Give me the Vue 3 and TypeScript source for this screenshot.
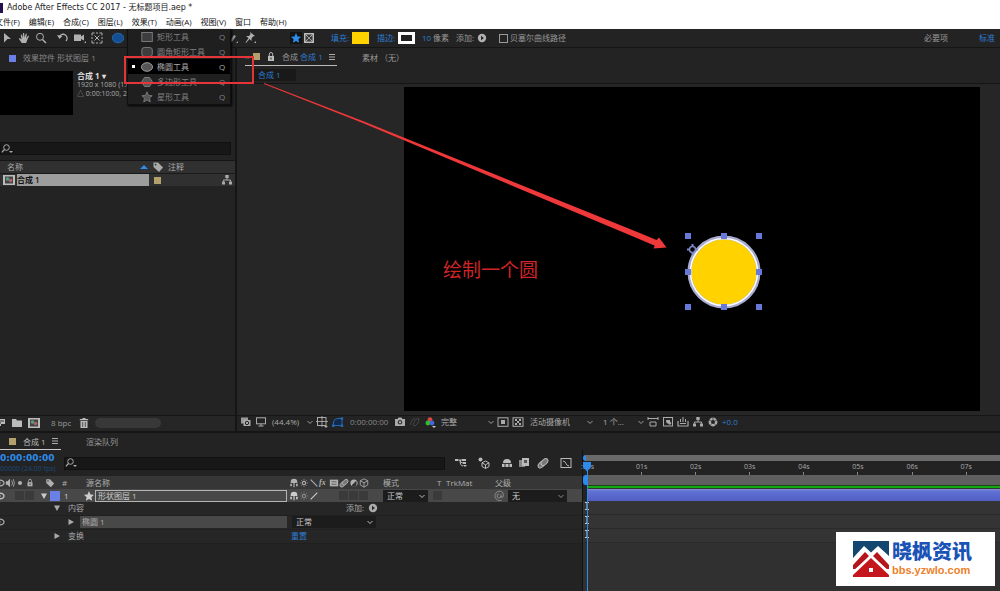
<script setup lang="ts">
import { h } from 'vue'

const icons: Record<string, string> = {
  select: '<path d="M3 1l7 6H6.500L3 10.500z" fill="currentColor"/>',
  hand: '<path d="M3.800 11L.8 6.800l1-.7L3.500 7.500 2.700 2.800l1-.3 1.100 3.300L5 1h1.100l.4 4.600L7.800 1.500l1 .3-.6 4.600 1.900-2.800.9.5L9 8.500 8.200 11z" fill="currentColor"/>',
  zoom: '<circle cx="5" cy="4.800" r="3.500" fill="none" stroke="currentColor"/><path d="M7.500 7.500L11 11" stroke="currentColor" stroke-width="1.500"/>',
  rotate: '<path d="M2.500 4.500A4 4 0 1 1 9 9" fill="none" stroke="currentColor" stroke-width="1.300"/><path d="M0 3l2.500 4L5.500 4z" fill="currentColor"/>',
  camera: '<path d="M0 2.500h7v2l3-2v6L7 7v2H0zM10 11h2V9z" fill="currentColor"/>',
  pan: '<path d="M1 3.500V1h2.500M8.500 1H11v2.500M11 8.500V11H8.500M3.500 11H1V8.500M5 1h2M5 11h2M1 5v2M11 5v2M3.500 3.500l5 5M8.500 3.500l-5 5" fill="none" stroke="currentColor"/><path d="M5 5h2v2H5z" fill="currentColor"/>',
  ellipse: '<ellipse cx="6" cy="6" rx="5.800" ry="4.800" fill="#164f91" stroke="#2476c8" stroke-width=".7"/>',
  pen: '<path d="M1 10l5-7 2 1-4 6zM8 11h2V9z" fill="currentColor"/>',
  pin: '<path d="M6 0l5 4-2 .5-1.500 2V9L5.500 7 2 11l-.5-.5L4.500 6 2 4h3l1.500-1.800zM10 11h2V9z" fill="currentColor"/>',
  star: '<path d="M6 1l1.500 3.400 3.500.4-2.600 2.400.7 3.600L6 9 2.900 10.800l.7-3.600L1 4.800l3.500-.4z" fill="currentColor"/>',
  starline: '<path d="M6 .8l1.500 3.500 3.700.4-2.700 2.500.8 3.700L6 9 2.700 10.900l.8-3.700L.8 4.700l3.700-.4z" fill="#555" stroke="currentColor" stroke-width=".8"/>',
  tonecheck: '<rect x="1.500" y="1.500" width="9" height="9" fill="#777" stroke="#bbb"/><circle cx="6" cy="6" r="3" fill="#333"/><path d="M2 2l8 8M10 2l-8 8" stroke="#bbb" stroke-width=".8"/>',
  add: '<circle cx="6" cy="6" r="4.200" fill="currentColor"/><path d="M5 3.800L7.800 6 5 8.200z" fill="#222"/>',
  rect: '<rect x=".8" y="1.500" width="10.500" height="9" fill="#3d3d3d" stroke="currentColor" stroke-width=".9"/>',
  round: '<rect x=".8" y="1.500" width="10.500" height="9" rx="2.500" fill="#3d3d3d" stroke="currentColor" stroke-width=".9"/>',
  oval: '<ellipse cx="6" cy="6" rx="5.500" ry="4.300" fill="#555" stroke="currentColor" stroke-width=".9"/>',
  poly: '<path d="M3.500 1.500h5L11.500 6l-3 4.500h-5L.5 6z" fill="#555" stroke="currentColor" stroke-width=".9"/>',
  lock: '<rect x="3" y="5" width="6" height="5" fill="currentColor"/><path d="M4.300 5V3.200a1.700 1.700 0 0 1 3.400 0V5" fill="none" stroke="currentColor"/><path d="M6 6.500v2" stroke="#222"/>',
  menu: '<path d="M3 3.500h6M3 6h6M3 8.500h6" stroke="currentColor" stroke-width=".9"/>',
  search: '<circle cx="5.500" cy="4.500" r="2.800" fill="none" stroke="currentColor"/><path d="M3.500 6.500L.8 9.300" stroke="currentColor" stroke-width="1.200"/><path d="M8 8h4l-2 2z" fill="currentColor"/>',
  up: '<path d="M2 8l4-4 4 4z" fill="#2d8ceb"/>',
  tag: '<path d="M1.500 1.500h4.500L11 6.500 7 11 1.500 6z" fill="currentColor"/><circle cx="3.600" cy="3.600" r=".9" fill="#333"/>',
  comp: '<rect x="0" y="1" width="12" height="10" fill="#bbb"/><rect x="2" y="2.500" width="8" height="7" fill="#444"/><circle cx="4.500" cy="5" r="1.800" fill="#5a9c8a"/><circle cx="7.500" cy="6.500" r="1.800" fill="#a66"/>',
  tree: '<path d="M4.300 1h3.400v3H4.300zM1 7.500h3v3H1zM8 7.500h3v3H8z" fill="currentColor"/><path d="M6 4v2M2.500 7.500V6h7v1.500" fill="none" stroke="currentColor"/>',
  footage: '<path d="M0 2h9v5H5v2H0z" fill="currentColor"/><path d="M1 4h7M1 6h4" stroke="#333"/>',
  folder: '<path d="M1 2h4l1 1.500h5V10H1z" fill="currentColor"/>',
  trash: '<path d="M2.500 4h7v7h-7zM1.800 2h8.400v1.200H1.800zM4.500 1h3v1h-3z" fill="currentColor"/><path d="M4.700 5v5M7.300 5v5" stroke="#333" stroke-width=".8"/>',
  layers: '<rect x="1" y="1.500" width="7" height="6" fill="#999"/><path d="M3.500 4h7v6h-7z" fill="currentColor"/><circle cx="7" cy="7" r="1.700" fill="none" stroke="#222"/>',
  monitor: '<rect x="1.500" y="1.800" width="9" height="6" fill="none" stroke="currentColor"/><path d="M3.500 10h5M6 8v2" stroke="currentColor"/>',
  chev: '<path d="M3.500 5L6 7.500 8.500 5" fill="none" stroke="currentColor" stroke-width=".9"/>',
  guides: '<rect x="1.500" y="1.500" width="8.500" height="8" fill="none" stroke="currentColor"/><path d="M6 0v11M0 5.500h12" stroke="currentColor" stroke-width=".9"/><path d="M8 10h4l-2 2z" fill="currentColor"/>',
  mask: '<path d="M1.500 9.500V6Q2 2.500 6 2.500h4v7z" fill="#10284a" stroke="#2467b0"/><path d="M0 8.500h2.500V11H0zM8.700 1.200h2.500v2.500H8.700zM8.700 8.500h2.500V11H8.700z" fill="#2467b0"/>',
  snap: '<path d="M1 3h2.500l1-1.500h3L8.500 3H11v7H1z" fill="currentColor"/><circle cx="6" cy="6.300" r="2.200" fill="#333"/><circle cx="6" cy="6.300" r="1" fill="#ccc"/>',
  ghost: '<path d="M2 9l2-5 3-2M5 9l2-5 4-2-1 5-3 3z" stroke="#444" fill="none"/>',
  rgb: '<circle cx="6" cy="3.600" r="2.400" fill="#d44"/><circle cx="3.900" cy="7" r="2.400" fill="#3b3"/><circle cx="8" cy="7" r="2.400" fill="#46d"/><path d="M8 10h4l-2 2z" fill="#ccc"/>',
  roi: '<rect x="1" y="1.800" width="10" height="8.500" fill="none" stroke="currentColor"/><rect x="4" y="4" width="4" height="4" fill="currentColor"/>',
  grid: '<rect x="1" y="1.800" width="10" height="8.500" fill="none" stroke="currentColor"/><path d="M3 3h2v2H3zM7 3h2v2H7zM5 5h2v2H5zM3 7h2v2H3zM7 7h2v2H7z" fill="currentColor"/>',
  aspect: '<path d="M1 1v3M11 1v3M1 2.500h10M3 6h6v4H3z" fill="none" stroke="currentColor"/>',
  fast: '<rect x="1.500" y="1.500" width="9" height="8.500" fill="none" stroke="currentColor"/><path d="M4 4h4v1.500L9.500 7 8 9 6 7.500 4.500 7z" fill="currentColor"/>',
  tl: '<path d="M1 5v5h10V5M3 7.500h6" fill="none" stroke="currentColor" stroke-width="1.200"/><path d="M5.500 1h1v5h-1zM3 3h1v3H3zM8 3h1v3H8z" fill="currentColor"/>',
  shutter: '<circle cx="6" cy="6" r="3.200" fill="none" stroke="currentColor" stroke-width="2.400"/><path d="M6 1v3M10 4L7.500 5M9 10L7.500 7.500M3 10l1.500-2.500M2 4l2.500 1" stroke="#333" stroke-width=".7"/>',
  eye: '<ellipse cx="6" cy="6" rx="5" ry="3" fill="none" stroke="currentColor" stroke-width="1.300"/><circle cx="6" cy="6" r="1.500" fill="currentColor"/>',
  speaker: '<path d="M1 4h2l3-3v10L3 8H1z" fill="currentColor"/><path d="M8 3q2 3 0 6M10 1.500q2.500 4.500 0 9" fill="none" stroke="currentColor"/>',
  solo: '<circle cx="6" cy="6" r="2.500" fill="currentColor"/>',
  down: '<path d="M3 3.500h6L6 9z" fill="currentColor"/>',
  right: '<path d="M3.500 3l5.500 3-5.500 3z" fill="currentColor"/>',
  shy: '<path d="M2 5a4 4 0 0 1 8 0v1H2zM5.300 6h1.400v5H5.300zM1.500 7h2v3h-2zM8.500 7h2v3h-2z" fill="currentColor"/>',
  sun: '<circle cx="6" cy="6" r="2" fill="none" stroke="currentColor" stroke-width="1.300"/><path d="M6 1v2M6 9v2M1 6h2M9 6h2M2.500 2.500l1 1M9.500 9.500l-1-1M9.500 2.500l-1 1M2.500 9.500l1-1" stroke="currentColor" stroke-width=".7"/>',
  back: '<path d="M2 2l8 8" stroke="currentColor" stroke-width="1.300"/>',
  slash: '<path d="M2 10l8-8" stroke="currentColor" stroke-width="1.300"/>',
  film: '<rect x="1" y="2" width="10" height="8" fill="currentColor"/><path d="M3 4.500h6M3 7.500h6" stroke="#555"/>',
  blur: '<ellipse cx="4.500" cy="7.500" rx="4" ry="2.500" transform="rotate(-45 4.500 7.500)" fill="#777" stroke="currentColor"/><ellipse cx="7.500" cy="5" rx="4" ry="2.500" transform="rotate(-45 7.500 5)" fill="#777" stroke="currentColor"/>',
  half: '<circle cx="6" cy="6" r="4.300" fill="currentColor"/><path d="M9 3L3 9A4.300 4.300 0 0 0 9 9z" fill="#333"/>',
  cube: '<path d="M6 1l4.500 2.300v5L6 11 1.500 8.300v-5zM1.500 3.300L6 5.800l4.500-2.500M6 5.800V11" fill="none" stroke="currentColor"/>',
  whorl: '<path d="M6 4a2 2 0 1 0 2 2V4.200M8 6q0 2 2 1 1.500-5-3-5.800a4.700 4.700 0 1 0 1.500 9" fill="none" stroke="currentColor" stroke-width=".8"/>',
  flow: '<path d="M0 3h7M5 3q0 3 3 3M5 3q0 6 3 6" fill="none" stroke="currentColor"/><path d="M0 2h3v2H0zM7 2h4v2H7zM8 5h3v2H8zM8 8h4l-2 2z" fill="currentColor"/>',
  draft: '<circle cx="2.500" cy="2.500" r="2" fill="currentColor"/><path d="M7.500 4L11 5.800v3.700L7.500 11.500 4 9.500V5.800zM4 5.800l3.500 2L11 5.800M7.500 7.800v3.500" fill="none" stroke="currentColor"/>',
  shyon: '<path d="M2 6a4 4 0 0 1 8 0zM1 7h10v3H1z" fill="currentColor"/><path d="M4 7v3M8 7v3M1 6.500h10" stroke="#333"/>',
  frames: '<path d="M1 3h6v7H1z" fill="#888"/><path d="M4 1h7v8H4z" fill="currentColor"/><path d="M6 3h3v3H6z" fill="#555"/>',
  graph: '<rect x="1" y="1.500" width="10" height="9" fill="none" stroke="currentColor"/><path d="M3 4q2 0 3 2.500T9 9" fill="none" stroke="currentColor"/>',
}
const Icon = (p: { n: string }) =>
  h('svg', { viewBox: '0 0 12 12', class: 'ic', 'aria-hidden': 'true', innerHTML: icons[p.n] })
Icon.props = ['n']

const menus = ['文件(F)', '编辑(E)', '合成(C)', '图层(L)', '效果(T)', '动画(A)', '视图(V)', '窗口', '帮助(H)']
const tools = ['select', 'hand', 'zoom', 'rotate', 'camera', 'pan', 'ellipse', 'pen', 'pin', 'star', 'tonecheck']
const shapes = [
  { icon: 'rect', name: '矩形工具' },
  { icon: 'round', name: '圆角矩形工具' },
  { icon: 'oval', name: '椭圆工具', on: true },
  { icon: 'poly', name: '多边形工具' },
  { icon: 'starline', name: '星形工具' },
]
const switches = ['shy', 'sun', 'back', 'fx', 'film', 'blur', 'half', 'cube']
const seconds = [':00s', '01s', '02s', '03s', '04s', '05s', '06s', '07s']
const handles = [[4, 4], [40, 4], [75, 4], [4, 40], [75, 40], [4, 75], [40, 75], [75, 75]]
</script>

<template>
  <div class="app">
    <header class="title"><i class="logo"></i>Adobe After Effects CC 2017 - 无标题项目.aep *</header>
    <nav class="menubar"><button v-for="m in menus" :key="m">{{ m }}</button></nav>

    <div class="toolbar">
      <button v-for="t in tools" :key="t" :class="'t-' + t" :aria-label="t"><Icon :n="t" /></button>
      <button class="blue">填充:</button><button class="swatch fill" aria-label="填充颜色"></button>
      <button class="blue">描边:</button><button class="swatch stroke" aria-label="描边颜色"></button>
      <span class="blue">10</span><span>像素</span><span>添加:</span>
      <button class="lite" aria-label="添加"><Icon n="add" /></button>
      <label class="check"><input type="checkbox" />贝塞尔曲线路径</label>
      <button>必要项</button><button class="blue">标准</button>
    </div>

    <main class="work">
      <section class="project">
        <div class="tabs"><i class="sq violet"></i><span>效果控件 形状图层 1</span></div>
        <div class="info">
          <div class="thumb"></div>
          <div class="meta"><b>合成 1 ▾</b><span>1920 x 1080 (1.00)</span><span>△ 0:00:10:00, 24.00 fps</span></div>
        </div>
        <label class="search"><Icon n="search" /><input type="text" aria-label="搜索项目" /></label>
        <table class="list">
          <thead><tr><th class="c-name">名称<Icon n="up" /></th><th class="c-tag"><Icon n="tag" /></th><th>注释</th><th class="c-net"></th></tr></thead>
          <tbody><tr><td class="c-name"><div class="entry"><Icon n="comp" /><span>合成 1</span></div></td><td class="c-tag"><i class="sq sand"></i></td><td></td><td class="c-net"><Icon n="tree" /></td></tr></tbody>
        </table>
        <footer class="pfoot">
          <button aria-label="解释素材"><Icon n="footage" /></button><button aria-label="新建文件夹"><Icon n="folder" /></button>
          <button aria-label="新建合成"><Icon n="comp" /></button><button>8 bpc</button>
          <button aria-label="删除"><Icon n="trash" /></button><i class="scroll"></i>
        </footer>
      </section>

      <section class="viewer">
        <div class="vtabs">
          <div class="vtab"><span>×</span><i class="sq sand"></i><Icon n="lock" /><span>合成 <a href="#">合成 1</a></span><Icon n="menu" /></div>
          <span>素材 （无）</span>
        </div>
        <div class="crumbs"><a href="#">合成 1</a></div>
        <div class="stage">
          <div class="canvas">
            <span class="note">绘制一个圆</span>
            <svg class="disc" viewBox="0 0 80 80">
              <circle cx="40" cy="40" r="34.500" fill="#ffd200" stroke="#a9acd0" stroke-width="4" />
              <circle cx="40" cy="40" r="33.500" fill="none" stroke="#fff" stroke-width="1.500" />
              <rect v-for="([x, y], i) in handles" :key="i" :x="x - 3" :y="y - 3" width="6" height="6" fill="#6678d8" />
              <circle cx="8.500" cy="17.500" r="3" fill="none" stroke="#7c88c4" stroke-width="1.500" />
              <path d="M8.500 12v2.500M8.500 20.500V23M3 17.500h2.500M11.500 17.500H14" stroke="#7c88c4" stroke-width="2" />
            </svg>
          </div>
        </div>
        <footer class="vfoot">
          <Icon n="layers" /><Icon n="monitor" />
          <label class="sel"><select aria-label="缩放"><option>(44.4%)</option></select><Icon n="chev" /></label>
          <Icon n="guides" /><Icon n="mask" /><span class="dim">0:00:00:00</span><Icon n="snap" /><Icon n="ghost" /><Icon n="rgb" />
          <label class="sel"><select aria-label="分辨率"><option>完整</option></select><Icon n="chev" /></label>
          <Icon n="roi" /><Icon n="grid" />
          <label class="sel cam"><select aria-label="视图"><option>活动摄像机</option></select><Icon n="chev" /></label>
          <label class="sel"><select aria-label="视图布局"><option>1 个...</option></select><Icon n="chev" /></label>
          <Icon n="aspect" /><Icon n="fast" /><Icon n="tl" /><Icon n="tree" /><Icon n="shutter" /><span class="blue">+0.0</span>
        </footer>
      </section>
    </main>

    <section class="timeline">
      <div class="ttabs">
        <div class="ttab"><i class="sq sand"></i><span>合成 1</span><Icon n="menu" /></div><span>渲染队列</span>
      </div>
      <div class="tbody">
        <div class="outline">
          <div class="tbar">
            <div class="clock"><b>0:00:00:00</b><small>00000 (24.00 fps)</small></div>
            <label class="search"><Icon n="search" /><input type="text" aria-label="搜索图层" /></label>
            <Icon n="flow" /><Icon n="draft" /><Icon n="shyon" /><Icon n="frames" /><Icon n="blur" /><Icon n="graph" />
          </div>
          <div class="cols head">
            <span class="eye"><Icon n="eye" /></span><Icon n="speaker" /><Icon n="solo" /><Icon n="lock" /><Icon n="tag" /><i class="hash">#</i><span>源名称</span>
            <div class="sw"><template v-for="s in switches" :key="s"><em v-if="s === 'fx'">fx</em><Icon v-else :n="s" /></template></div>
            <span>模式</span><span>T</span><span>TrkMat</span><span>父级</span>
          </div>
          <div class="cols layer">
            <span class="eye"><Icon n="eye" /></span><i></i><i class="box"></i><i class="box"></i><div class="twirl"><Icon n="down" /><i class="sq big"></i></div><span>1</span>
            <div class="lname"><Icon n="star" /><span>形状图层 1</span></div>
            <div class="sw"><Icon n="shy" /><Icon n="sun" class="faint" /><Icon n="slash" /><i></i><i></i><i class="box"></i><i class="box"></i><i class="box"></i></div>
            <label class="sel dark mode"><select aria-label="模式"><option>正常</option></select><Icon n="chev" /></label>
            <i class="box"></i><i></i>
            <div class="parent"><Icon n="whorl" /><label class="sel dark"><select aria-label="父级"><option>无</option></select><Icon n="chev" /></label></div>
          </div>
          <div class="prop lv1"><Icon n="down" /><span>内容</span><div class="addp">添加:<Icon n="add" /></div></div>
          <div class="prop lv2"><span class="eye"><Icon n="eye" /></span><Icon n="right" /><span class="pname">椭圆 1</span><label class="sel dark"><select aria-label="混合模式"><option>正常</option></select><Icon n="chev" /></label></div>
          <div class="prop lv1"><Icon n="right" /><span>变换</span><a href="#" class="reset">重置</a></div>
        </div>
        <div class="tracks">
          <div class="navi"></div>
          <div class="ruler"><span v-for="s in seconds" :key="s">{{ s }}</span></div>
          <div class="area"></div>
          <div class="cache"></div>
          <div class="bar"></div>
          <div v-for="n in 3" :key="n" class="lane"><svg viewBox="0 0 6 8"><path d="M1 .5h4M3 .5v7M1 7.500h4" fill="none" stroke="#c5c5c5" /></svg></div>
          <div class="rest"></div>
          <svg class="playhead" viewBox="0 0 10 10"><path d="M1 0h8v5L5 9.500 1 5z" fill="#2d8ceb" /></svg>
          <i class="needle"></i>
        </div>
      </div>
    </section>

    <div class="flyout" role="menu">
      <button v-for="s in shapes" :key="s.name" role="menuitem" :class="{ on: s.on }"><i></i><Icon :n="s.icon" /><span>{{ s.name }}</span><kbd>Q</kbd></button>
    </div>

    <div class="mark"></div>
    <svg class="arrow" viewBox="0 0 1000 591"><path d="M264 83l100 38.500L641 233.500l15.500 6.500L659 237.500l7.500 10-13 1 1.300-2.800L639 239 364 123.500l-100-39.500z" fill="#ee383a" /></svg>

    <aside class="brand">
      <svg viewBox="0 0 36 36">
        <path d="M0 0h36v15L25 5 18 11.500 11 5 0 17z" fill="#14476f" />
        <path d="M0 24L12 11l4 4L3 28H0zM36 24L24 11l-4 4 13 13h3z" fill="#b5161d" />
        <path d="M0 30L18 14l18 16v6H0z" fill="#fff" /><path d="M0 34L18 17l18 17v2H0z" fill="#c4161c" />
        <path d="M16 27h4v4h-4z" fill="#fff" />
      </svg>
      <div><strong>晓枫资讯</strong><span>bbs.yzwlo.com</span></div>
    </aside>
  </div>
</template>

<style>
body { margin: 0; background: #232323; }
</style>

<style scoped>
* { box-sizing: border-box; }
.app { position: relative; height: 100vh; min-height: 560px; display: flex; flex-direction: column; overflow: hidden; background: #232323; color: #999; font: 8px/12px "Open Sans", "Noto Sans CJK SC", sans-serif; white-space: nowrap; }
button, input, select { font: inherit; color: inherit; background: none; border: 0; padding: 0; margin: 0; text-align: left; appearance: none; min-width: 0; outline: 0; }
a { color: #2d7dd2; text-decoration: none; }
i { font-style: normal; }
.ic { width: 12px; height: 12px; flex: none; display: block; }
.blue { color: #2d7dd2; }
.dim { color: #888; }
.sq { width: 7px; height: 7px; flex: none; display: block; }
.violet { background: #6b80e6; }
.sand { background: #b3a06c; }

.title { height: 15px; flex: none; background: #fff; display: flex; align-items: center; gap: 4px; color: #222; font-family: "DejaVu Sans", "Noto Sans CJK SC", sans-serif; }
.logo { width: 3px; height: 10px; background: #24104f; }
.menubar { height: 14px; flex: none; background: #fff; color: #111; display: flex; gap: 9px; align-items: center; padding-bottom: 1px; }
.menubar button:first-child { margin-left: -5px; }
.toolbar { height: 19px; flex: none; border-bottom: 1px solid #151515; display: grid; align-items: center; padding-left: 1px; grid-template-columns: 17px 17px 22px 17px 17px 21px 116px 16px 46px 13px 28px 21px 25px 21px 24px 11px 23px 20px 23px 1fr 55px 21px; }
.t-select, .t-hand, .t-zoom, .t-rotate, .t-camera, .t-pan, .t-pin, .lite { color: #b0b0b0; }
.t-star { color: #2d8ceb; background: #141414; width: 12px; }
.swatch { height: 12px; width: 17px; }
.fill { background: #ffd200; }
.stroke { background: #222; border: 3px solid #fff; }
.check { display: flex; align-items: center; gap: 2px; }
.check input { width: 9px; height: 9px; border: 1px solid #999; }

.work { flex: 1; min-height: 0; display: flex; }
.project { width: 237px; flex: none; border-right: 2px solid #151515; display: flex; flex-direction: column; }
.tabs { height: 23px; display: flex; align-items: center; gap: 7px; padding: 0 9px 3px; color: #888; }
.info { height: 70px; display: flex; gap: 4px; }
.thumb { width: 73px; height: 44px; background: #000; }
.meta { font-size: 7px; line-height: 9px; display: flex; flex-direction: column; color: #aaa; }
.meta b { font-size: 8px; color: #ddd; }
.search { display: flex; align-items: center; background: #171717; border: 1px solid #111; height: 13px; color: #aaa; }
.search input { flex: 1; height: 11px; }
.project .search { margin: 1px 4px 5px 0; }
.list { width: 100%; border-collapse: collapse; table-layout: fixed; border-top: 1px solid #151515; }
.list th { text-align: left; font-weight: 400; background: #303030; color: #aaa; height: 13px; padding: 0; line-height: 12px; border-bottom: 1px solid #1a1a1a; }
.list td { padding: 0; height: 12px; line-height: 12px; background: #303030; }
.list .c-name { width: 150px; }
.list .c-tag { width: 18px; padding-left: 2px; }
.list .c-net { width: 14px; color: #aaa; }
th.c-name .ic { float: right; }
.list th.c-name { padding-left: 7px; }
.entry { display: flex; gap: 2px; padding-left: 3px; }
.entry span { flex: 1; margin-right: 1px; background: #9d9d9d; color: #111; font-weight: 600; }
.c-tag .sq { margin-left: 2px; }
.pfoot { margin-top: auto; height: 16px; padding-bottom: 1px; border-top: 1px solid #151515; background: #262626; display: grid; align-items: center; grid-template-columns: 11px 17px 23px 27px 17px 66px; }
.pfoot button:first-child { margin-left: -4px; }
.pfoot .ic { color: #bbb; }
.scroll { height: 10px; border-radius: 5px; background: #383838; }

.viewer { flex: 1; min-width: 0; display: flex; flex-direction: column; }
.vtabs { height: 18px; flex: none; display: flex; gap: 25px; padding-left: 8px; line-height: 20px; }
.vtab { width: 92px; display: flex; gap: 5px; align-items: center; border-bottom: 1px solid #bbb; }
.vtab .ic { color: #bbb; }
.vtab .ic:last-child { margin-left: -2px; }
.vtab > span:first-child { width: 4px; margin-right: -1px; }
.vtab > span { flex: none; }
.crumbs { height: 18px; flex: none; padding: 3px 0 2px 17px; border-bottom: 1px solid #151515; }
.crumbs a { display: block; width: 42px; padding-left: 4px; background: #191919; }
.stage { flex: 1; display: flex; padding: 3px 20px 4px 167px; background: #262626; }
.canvas { flex: 1; position: relative; background: #000; }
.note { position: absolute; left: 39px; top: 52.5%; color: #cf2427; font-size: 19px; line-height: 26px; }
.disc { position: absolute; left: 55.5%; top: 57%; width: 80px; height: 80px; margin: -40px; }
.vfoot { height: 16px; flex: none; border-top: 1px solid #151515; display: grid; align-items: center; padding: 0 0 3px 3px; color: #aaa; grid-template-columns: 15px 17px 44px 16px 18px 44px 14px 16px 17px 56px 15px 18px 73px 44px 15px 15px 15px 15px 15px 1fr; }
.sel { display: grid; align-items: center; height: 12px; }
.sel select { grid-area: 1 / 1; width: 100%; height: 12px; line-height: 12px; }
.sel .ic { grid-area: 1 / 1; justify-self: end; pointer-events: none; }
.sel.cam { width: 66px; }
.dark { background: #1c1c1c; color: #ccc; padding-left: 4px; }

.timeline { height: 160px; flex: none; border-top: 2px solid #151515; display: flex; flex-direction: column; }
.ttabs { height: 17px; flex: none; display: flex; gap: 25px; line-height: 17px; }
.ttab { width: 61px; padding-left: 9px; display: flex; align-items: center; gap: 7px; border-bottom: 1px solid #ccc; color: #bbb; }
.ttab .ic { margin-left: -4px; }
.tbody { flex: 1; display: flex; }
.outline { width: 583px; flex: none; border-right: 1px solid #111; }
.tbar { height: 26px; display: grid; align-items: center; color: #bbb; grid-template-columns: 64px 391px 23px 23px 17px 19px 23px 12px; }
.tbar .search { margin-right: 10px; }
.clock { display: flex; flex-direction: column; color: #2d8ceb; }
.clock b { font: bold 9px/11px "DejaVu Sans", sans-serif; }
.clock small { font-size: 7px; line-height: 9px; color: #1a4a7c; }
.cols { height: 13px; display: grid; align-items: center; color: #b0b0b0; grid-template-columns: 5px 10px 10px 20px 17px 24px 203px 94px 54px 9px 49px 1fr; }
.cols > .ic, .sw .ic { width: 10px; height: 10px; }
.head { background: #363636; }
.layer { background: #484848; color: #ccc; grid-template-columns: 5px 10px 10px 10px 29px 22px 203px 94px 50px 13px 47px 1fr; }
.eye { width: 5px; height: 12px; overflow: hidden; display: flex; justify-content: flex-end; }
.sw { display: grid; grid-template-columns: repeat(8, 10px); align-items: center; }
.sw em { font: italic bold 8px/10px "Liberation Serif", serif; }
.faint { color: #888; }
.box { height: 9px; width: 9px; background: #3a3a3a; }
.twirl { display: flex; align-items: center; padding-left: 3px; }
.sq.big { width: 10px; height: 10px; background: #6b80e6; }
.lname { display: flex; align-items: center; margin-right: 2px; margin-left: -3px; }
.lname span { flex: 1; border: 1px solid #b5b5b5; line-height: 10px; height: 12px; padding-left: 2px; }
.mode { width: 45px; }
.parent { display: flex; gap: 3px; }
.parent .ic { color: #999; }
.parent .sel { width: 59px; }
.prop { height: 14px; display: flex; align-items: center; color: #aaa; padding-bottom: 1px; border-bottom: 1px solid #202020; background: #262626; }
.lv1 { padding-left: 51px; gap: 5px; }
.addp { display: flex; align-items: center; gap: 3px; margin-left: 257px; }
.lv2 .eye { margin-right: 60px; }
.pname { width: 207px; background: #484848; margin: 0 5px 0 3px; padding-left: 2px; }
.lv2 .sel { width: 84px; }
.reset { margin-left: 202px; }

.tracks { flex: 1; min-width: 0; position: relative; padding: 5px 0 0 4px; display: flex; flex-direction: column; }
.navi { height: 6px; background: #6a6a6a; border-left: 3px solid #2d8ceb; margin-left: -4px; border-radius: 3px 0 0 3px; }
.ruler { height: 14px; display: grid; grid-auto-flow: column; grid-auto-columns: 13.1%; font-size: 7px; line-height: 11px; color: #aaa; }
.ruler span { width: 1px; display: flex; justify-content: center; background: linear-gradient(#888, #888) 0 100% / 1px 3px no-repeat; }
.area { height: 10px; background: #5f5f5f; border-left: 4px solid #2d8ceb; margin-left: -4px; border-radius: 3px 0 0 3px; }
.cache { height: 3px; background: #12a912; border-top: 1px solid #1c451c; }
.bar { height: 13px; background: linear-gradient(#8a92d0, #6171d4 2px, #525fc4); border-top: 1px solid #333; }
.lane { height: 14px; margin-left: -4px; padding: 1px 0 0 1px; background: #343434; border-bottom: 1px solid #2a2a2a; }
.lane svg { width: 6px; height: 8px; display: block; }
.rest { flex: 1; margin-left: -4px; background: #303030; }
.playhead { position: absolute; left: -1px; top: 12px; width: 10px; height: 10px; }
.needle { position: absolute; z-index: 1; left: 4px; top: 20px; bottom: 0; width: 1px; background: #2d8ceb; }

.flyout { position: absolute; left: 127px; top: 29px; width: 104px; background: #1f1f1f; border: 1px solid #101010; border-top: 0; box-shadow: 1px 1px 2px #000; color: #808080; }
.flyout button { width: 100%; height: 15px; display: grid; align-items: center; grid-template-columns: 13px 16px 62px 1fr; }
.flyout .on { background: #000; color: #aaa; }
.flyout i { width: 3px; height: 3px; margin-left: 4px; }
.flyout .on i { background: #fff; }
.flyout kbd { font: inherit; }
.mark { position: absolute; left: 124px; top: 56px; width: 130px; height: 28px; border: 2px solid #e5353a; }
.arrow { position: absolute; left: 0; top: 0; width: 1000px; height: 591px; pointer-events: none; }
.brand { position: absolute; z-index: 2; right: 5px; bottom: 5px; width: 159px; height: 54px; background: #fff; display: flex; align-items: center; gap: 3px; padding-left: 17px; }
.brand svg { width: 36px; height: 36px; }
.brand div { display: flex; flex-direction: column; }
.brand strong { font: 900 20px/23px "Liberation Sans", "Noto Sans CJK SC", sans-serif; color: #1853b5; }
.brand span { font: bold 11px/13px "Liberation Sans", sans-serif; color: #ee7f2b; }
</style>
